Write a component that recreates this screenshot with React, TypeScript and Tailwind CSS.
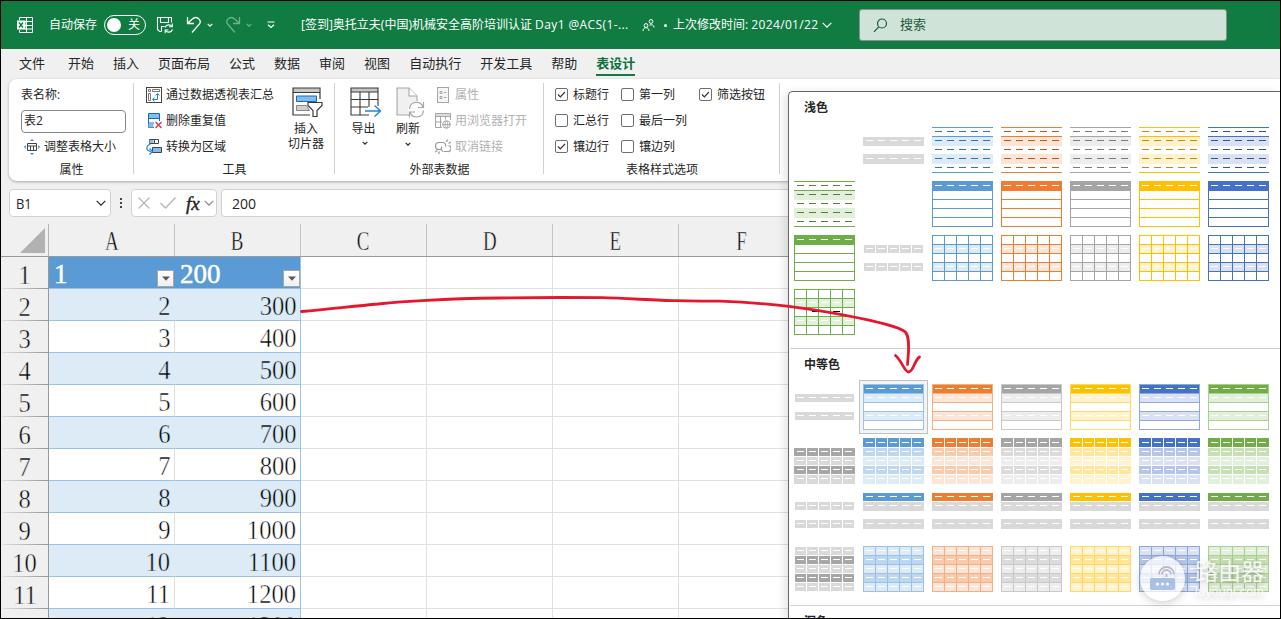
import React from "react";
import { clsx } from "clsx";

type Palette = { base: string; dark: string; mid: string; light: string; line: string };

const palettes: Record<string, Palette> = {
  blue: { base: "#5b9bd5", dark: "#2f75b5", mid: "#bdd7ee", light: "#ddebf7", line: "#9bc2e6" },
  orange: { base: "#ed7d31", dark: "#c65911", mid: "#f8cbad", light: "#fce4d6", line: "#f4b084" },
  gray: { base: "#a5a5a5", dark: "#7b7b7b", mid: "#dbdbdb", light: "#ededed", line: "#c9c9c9" },
  yellow: { base: "#ffc000", dark: "#bf8f00", mid: "#ffe699", light: "#fff2cc", line: "#ffd966" },
  navy: { base: "#4472c4", dark: "#305496", mid: "#b4c6e7", light: "#d9e1f2", line: "#8ea9db" },
  green: { base: "#70ad47", dark: "#548235", mid: "#c6e0b4", light: "#e2efda", line: "#a9d08e" },
};

const cols = [0, 1, 2, 3, 4];

function Dashes({ y, fill = "#fff" }: { y: number; fill?: string }) {
  return (
    <>
      {cols.map((c) => (
        <rect key={c} x={3 + 12 * c} y={y} width={7} height={1} fill={fill} />
      ))}
    </>
  );
}

function Band({ y, h, fill, x = 0, w = 61 }: { y: number; h: number; fill: string; x?: number; w?: number }) {
  return <rect x={x} y={y} width={w} height={h} fill={fill} />;
}

function Cells({ y, h, fill, full }: { y: number; h: number; fill: string; full?: boolean }) {
  return (
    <>
      {cols.map((c) => {
        const x = full && c === 0 ? 0 : 1 + 12 * c;
        const end = full && c === 4 ? 61 : 12 + 12 * c;
        return <rect key={c} x={x} y={y} width={end - x} height={h} fill={fill} />;
      })}
    </>
  );
}

function Grid({ color, vertical }: { color: string; vertical?: boolean }) {
  return (
    <>
      {[0, 9, 18, 27, 36, 45].map((y) => (
        <rect key={y} x={0} y={y} width={61} height={1} fill={color} />
      ))}
      {(vertical ? [0, 12, 24, 36, 48, 60] : [0, 60]).map((x) => (
        <rect key={x} x={x} y={0} width={1} height={46} fill={color} />
      ))}
    </>
  );
}

const G = "#d9d9d9";
const D = "#a6a6a6";

function drawing(kind: string, p?: Palette) {
  switch (kind) {
    case "L1":
      return p ? (
        <>
          <Band y={9} h={10} fill={p.light} />
          <Band y={27} h={10} fill={p.light} />
          <Band y={0} h={1} fill={p.base} />
          <Band y={9} h={1} fill={p.base} />
          <Band y={45} h={1} fill={p.base} />
          {[4, 13, 22, 31, 40].map((y) => <Dashes key={y} y={y} fill={p.dark} />)}
        </>
      ) : (
        <>
          <Band y={10} h={9} fill={G} />
          <Band y={27} h={10} fill={G} />
          <Dashes y={13} />
          <Dashes y={31} />
        </>
      );
    case "L2":
      return p ? (
        <>
          <Grid color={p.base} />
          <Band y={0} h={10} fill={p.base} />
          <Dashes y={4} />
        </>
      ) : null;
    case "L3":
    case "L3x":
      return p ? (
        <>
          <Band y={10} h={8} fill={p.light} />
          <Band y={28} h={8} fill={p.light} />
          <Grid color={p.base} vertical />
          <Dashes y={13} />
          <Dashes y={31} />
          {kind === "L3x" && (
            <>
              <rect x={18} y={22} width={6} height={1} fill="#000" />
              <rect x={39} y={22} width={7} height={1} fill="#000" />
            </>
          )}
        </>
      ) : (
        <>
          <Cells y={10} h={8} fill={G} />
          <Cells y={28} h={8} fill={G} />
          <Dashes y={13} />
          <Dashes y={31} />
        </>
      );
    case "M1":
      return p ? (
        <>
          <Band y={0} h={46} fill="#fff" />
          <Band y={1} h={8} fill={p.base} />
          <Band y={10} h={8} fill={p.light} />
          <Band y={28} h={8} fill={p.light} />
          <Grid color={p.line} />
          <Dashes y={4} />
          <Dashes y={13} />
          <Dashes y={31} />
        </>
      ) : (
        <>
          <Band x={1} w={59} y={10} h={8} fill={G} />
          <Band x={1} w={59} y={28} h={8} fill={G} />
          <Dashes y={13} />
          <Dashes y={31} />
        </>
      );
    case "M2":
      return (
        <>
          {p && <Cells full y={0} h={9} fill={p.base} />}
          <Cells full y={10} h={8} fill={p ? p.mid : D} />
          <Cells full y={19} h={8} fill={p ? p.light : G} />
          <Cells full y={28} h={8} fill={p ? p.mid : D} />
          <Cells full y={37} h={9} fill={p ? p.light : G} />
          {[...(p ? [4] : []), 13, 22, 31, 40].map((y) => <Dashes key={y} y={y} />)}
        </>
      );
    case "M3":
      return p ? (
        <>
          <Band y={1} h={8} fill={p.base} />
          <Band y={10} h={9} fill={G} />
          <Band y={27} h={10} fill={G} />
          <Dashes y={4} />
          <Dashes y={13} />
          <Dashes y={31} />
        </>
      ) : (
        <>
          <Cells y={10} h={8} fill={G} />
          <Cells y={28} h={8} fill={G} />
          <Dashes y={13} />
          <Dashes y={31} />
        </>
      );
    default:
      return (
        <>
          {[1, 10, 19, 28, 37].map((y, i) =>
            p ? (
              <Band key={y} y={y} h={8} fill={i % 2 ? p.mid : p.light} />
            ) : (
              <Cells key={y} y={y} h={8} fill={i % 2 ? D : G} />
            ),
          )}
          {p && <Grid color={p.line} vertical />}
          {[4, 13, 22, 31, 40].map((y) => <Dashes key={y} y={y} />)}
        </>
      );
  }
}

function Thumb({ kind, tone, selected }: { kind: string; tone?: string; selected?: boolean }) {
  return (
    <div className="relative h-[46px] w-[61px]">
      {selected && <div className="absolute -inset-1 border border-[#c0c0c0] bg-[#f3f3f3]" />}
      {kind !== "none" && (
        <svg width="61" height="46" shapeRendering="crispEdges" className="relative block">
          {drawing(kind, tone ? palettes[tone] : undefined)}
        </svg>
      )}
    </div>
  );
}

const tones = ["blue", "orange", "gray", "yellow", "navy"];
const row = (kind: string, list: string[]) => list.map((tone) => ({ kind, tone }));
const lightItems: { kind: string; tone?: string }[] = [
  { kind: "none" }, { kind: "L1" }, ...row("L1", tones),
  { kind: "L1", tone: "green" }, { kind: "L2" }, ...row("L2", tones),
  { kind: "L2", tone: "green" }, { kind: "L3" }, ...row("L3", tones),
  { kind: "L3x", tone: "green" },
];
const mediumItems: { kind: string; tone?: string }[] = ["M1", "M2", "M3", "M4"].flatMap((k) => [
  { kind: k },
  ...row(k, [...tones, "green"]),
]);

function Gallery() {
  return (
    <div className="absolute bottom-0 left-[787px] right-0 top-[90px] overflow-hidden rounded-tl-[5px] border-l border-t border-[#666] bg-white shadow-[-3px_2px_10px_rgba(0,0,0,0.12)]">
      <div className="h-[35px] pl-[15px] text-[12px] font-bold leading-[31px] text-[#262626]">浅色</div>
      <div className="ml-[5px] grid grid-cols-[repeat(7,61px)] gap-2">
        {lightItems.map((t, i) => <Thumb key={i} {...t} />)}
      </div>
      <div className="ml-px mt-[13px] h-px bg-[#d0d0d0]" />
      <div className="h-[35px] pl-[15px] text-[12px] font-bold leading-[32px] text-[#262626]">中等色</div>
      <div className="ml-[5px] grid grid-cols-[repeat(7,61px)] gap-2">
        {mediumItems.map((t, i) => <Thumb key={i} {...t} selected={i === 1} />)}
      </div>
      <div className="ml-px mt-[13px] h-px bg-[#d0d0d0]" />
      <div className="h-[35px] pl-[15px] text-[12px] font-bold leading-[31px] text-[#262626]">深色</div>
    </div>
  );
}

function Chevron({ w = 7, className = "" }: { w?: number; className?: string }) {
  const h = w / 2;
  return (
    <svg width={w + 1} height={h + 2} viewBox={`0 0 ${w + 1} ${h + 2}`} className={clsx("block shrink-0", className)}>
      <path d={`M.7 .8 L${(w + 1) / 2} ${h + 0.6} L${w + 0.3} .8`} fill="none" stroke="currentColor" strokeWidth="1.2" />
    </svg>
  );
}

function TitleBar() {
  return (
    <div className="flex h-12 shrink-0 items-center bg-[#107c41] text-[12px] text-white">
      <svg width="18" height="18" viewBox="0 0 18 18" className="ml-[15px] shrink-0" fill="none" stroke="#fff" strokeWidth="1">
        <path d="M3.500 4V1.500h13v15h-13V14M10.500 1.500v15M3.500 5.500h13M9 9.500h7.500M9 13h7.500" />
        <rect x="1" y="4.500" width="8.500" height="9" fill="#fff" stroke="none" />
        <path d="M3 6.500l4 5M7 6.500l-4 5" stroke="#107c41" strokeWidth="1.400" />
      </svg>
      <span className="ml-[15px] w-[49px] shrink-0 whitespace-nowrap">自动保存</span>
      <div className="ml-[6px] flex h-5 w-[42px] shrink-0 items-center rounded-full border border-white pl-[2px]">
        <div className="size-[14px] rounded-full bg-white" />
        <span className="ml-[7px] text-[12px] leading-none">关</span>
      </div>
      <svg width="18" height="18" viewBox="0 0 18 18" className="ml-[10px] shrink-0" fill="none" stroke="#fff" strokeWidth="1.100">
        <path d="M5.500 15.500h-2L1.500 13.500v-12h14v5M4.500 1.500v5h8v-5M5.500 15.500v-5h3" />
        <path d="M9 11.500a4 4 0 0 1 7-1M16.300 7.500v3.200h-3.200M16.500 13.500a4 4 0 0 1-7 1M9.200 17.200v-3.200h3.200" />
      </svg>
      <svg width="16" height="18" viewBox="0 0 16 18" className="ml-[12px] shrink-0" fill="none" stroke="#fff" strokeWidth="1.300">
        <path d="M1.500 1v6.500H8M1.500 7.500L6 3.200c5-4.400 10.500 1.300 7 5.300L6 16.500" />
      </svg>
      <Chevron w={5} className="ml-[5px]" />
      <svg width="16" height="18" viewBox="0 0 16 18" className="ml-[12px] shrink-0 opacity-40" fill="none" stroke="#fff" strokeWidth="1.300">
        <path d="M14.500 1v6.500H8M14.500 7.500L10 3.200C5-1.200-.5 4.500 3 8.500L10 16.500" />
      </svg>
      <Chevron w={5} className="ml-[5px] opacity-40" />
      <svg width="8" height="8" viewBox="0 0 8 8" className="ml-[15px] shrink-0" fill="none" stroke="#fff" strokeWidth="1.200">
        <path d="M.5 1h7M1 3.800l3 2.700 3-2.700" />
      </svg>
      <div className="ml-[26px] w-[334px] shrink-0 whitespace-nowrap">
        [签到]奥托立夫(中国)机械安全高阶培训认证 <span className="tracking-[0.4px]">Day1 @ACS(1-...</span>
      </div>
      <svg width="13" height="13" viewBox="0 0 13 13" className="ml-[7px] shrink-0" fill="none" stroke="#fff" strokeWidth="1">
        <circle cx="4" cy="6.500" r="1.900" />
        <path d="M1 12c0-4.500 6-4.500 6 0" />
        <circle cx="9" cy="2.500" r="1.900" />
        <path d="M7.500 6.200c2-1 4.500-.3 4.500 2.300" />
      </svg>
      <div className="ml-[9px] size-[3px] shrink-0 rounded-full bg-white" />
      <div className="ml-[6px] w-[146px] shrink-0 whitespace-nowrap">
        上次修改时间: <span className="tracking-[0.350px]">2024/01/22</span>
      </div>
      <Chevron w={9} className="ml-[3px]" />
      <div className="ml-[27px] flex h-8 w-[368px] shrink-0 items-center rounded-[3px] border border-[#8a8f8c] bg-[#cfe3d8] text-[13px] text-[#1d5b39]">
        <svg width="15" height="15" viewBox="0 0 15 15" className="ml-[13px]" fill="none" stroke="#185c37" strokeWidth="1.200">
          <circle cx="9" cy="5.500" r="4.500" />
          <path d="M5.800 8.800L1 13.800" />
        </svg>
        <span className="ml-[12px]">搜索</span>
      </div>
    </div>
  );
}

const tabs = ["文件", "开始", "插入", "页面布局", "公式", "数据", "审阅", "视图", "自动执行", "开发工具", "帮助", "表设计"];

function Tabs() {
  return (
    <div className="flex h-[30px] shrink-0 gap-[19px] pl-[18px] text-[13px] leading-[29px] text-[#262626]">
      {tabs.map((t, i) => (
        <div
          key={t}
          className={clsx(
            "h-[27px] shrink-0 whitespace-nowrap",
            i === 0 && "mr-[4px]",
            i === 11 && "border-b-2 border-[#107c41] font-bold text-[#0f703b]",
          )}
        >
          {t}
        </div>
      ))}
    </div>
  );
}

function Group({ label, className, children }: { label: string; className: string; children: React.ReactNode }) {
  return (
    <div className={clsx("relative flex h-[97px] shrink-0 flex-col", className)}>
      <div className="flex h-[78px]">{children}</div>
      <div className="h-[18px] text-center leading-[19px]">{label}</div>
      <div className="absolute bottom-[5px] right-0 top-[1px] w-px bg-[#d1d1d1]" />
    </div>
  );
}

function Item({ icon, children, disabled }: { icon: React.ReactNode; children: React.ReactNode; disabled?: boolean }) {
  return (
    <div className={clsx("flex h-[26px] items-center gap-[4px] whitespace-nowrap", disabled && "text-[#b1b1b1]")}>
      <svg width="16" height="16" viewBox="0 0 16 16" fill="none" className="shrink-0">{icon}</svg>
      {children}
    </div>
  );
}

function Check({ label, on }: { label: string; on?: boolean }) {
  return (
    <div className="flex h-[26px] items-center gap-[5px] whitespace-nowrap">
      <div className="mb-[2px] flex size-[13px] items-center justify-center rounded-[2px] border border-[#6e6e6e] bg-white">
        {on && (
          <svg width="9" height="9" viewBox="0 0 9 9" fill="none" stroke="#333" strokeWidth="1.200">
            <path d="M1 4.500l2.300 2.300L8 2" />
          </svg>
        )}
      </div>
      {label}
    </div>
  );
}

function Ribbon() {
  return (
    <div className="ml-2 flex h-[102px] shrink-0 overflow-visible rounded-l-[8px] bg-white pt-[3px] text-[12px] text-[#262626] shadow-[0_1px_3px_rgba(0,0,0,0.3)]">
      <Group label="属性" className="w-[125px]">
        <div className="flex flex-col pl-3">
          <div className="h-[26px] leading-[26px]">表名称:</div>
          <div className="flex h-[26px] items-center">
            <div className="h-[23px] w-[105px] rounded-[4px] border border-[#868686] pl-[2px] leading-[20px]">表2</div>
          </div>
          <div className="pl-[3px]">
            <Item
              icon={
                <>
                  <path d="M3.500 4.500h9v7h-9zM3.500 7h9M6.500 7v4.500M9.500 7v4.500" stroke="#444" />
                  <path d="M8 0l2 2H6zM8 16l2-2H6zM0 8l1.800-2v4zM16 8l-1.800-2v4z" fill="#2b88d8" />
                </>
              }
            >
              调整表格大小
            </Item>
          </div>
        </div>
      </Group>
      <Group label="工具" className="w-[201px]">
        <div className="flex w-[144px] flex-col pl-[12px]">
          <Item
            icon={
              <>
                <rect x=".5" y=".5" width="15" height="15" stroke="#444" />
                <path d="M2.500 2.500h2v2h-2zM6.500 2.500h7v2h-7zM2.500 6.500h2v7h-2z" stroke="#777" />
                <path d="M7 12.500h4.500V7M9.500 8.500l2-2 2 2M8.500 10.500l-2 2 2 2" stroke="#1a86d9" />
              </>
            }
          >
            通过数据透视表汇总
          </Item>
          <Item
            icon={
              <>
                <path d="M2.500 1h11v4h-11z" fill="#83bdec" />
                <path d="M2.500.5h11v14h-11zM2.500 5.500h11M2.500 10h11" stroke="#0f6cbd" />
                <path d="M2.500 10.500h5v4h-5z" fill="#83bdec" />
                <path d="M8 8h8v8H8z" fill="#fff" />
                <path d="M9.500 9l6 6M15.500 9l-6 6" stroke="#e0314b" strokeWidth="1.300" />
              </>
            }
          >
            删除重复值
          </Item>
          <Item
            icon={
              <>
                <path d="M3.500.5h5v4h-5zM8.500.5h4v4h-4z" stroke="#444" />
                <path d="M3.500 1h4v3h-4z" fill="#83bdec" />
                <path d="M6.500 8.500h9v5h-9z" fill="#83bdec" stroke="#444" />
                <path d="M4.500 5C-.5 7-.5 12 5 12.500M3.500 9.500l3 3-3 3" stroke="#1a86d9" strokeWidth="1.200" />
              </>
            }
          >
            转换为区域
          </Item>
        </div>
        <div className="flex w-[56px] flex-col items-center pt-[5px] leading-[15px]">
          <svg width="32" height="32" viewBox="0 0 32 32" fill="none" className="ml-[2px]">
            <path d="M2 1h26v4H2z" fill="#c8c6c4" />
            <path d="M29 12V1H2v27h17" stroke="#3b3a39" strokeWidth="1.200" />
            <path d="M2 5.500h27" stroke="#3b3a39" />
            <path d="M5.500 9h20v5.500h-20z" fill="#83bdec" stroke="#0f6cbd" />
            <path d="M5.500 18.500h10l3 5h-13z" fill="#d2d0ce" stroke="#8a8886" />
            <path d="M17 15.500h14v3l-5 5v6h-4v-6l-5-5z" fill="#fff" stroke="#3b3a39" strokeWidth="1.200" />
          </svg>
          <span className="mt-[2px]">插入</span>
          <span>切片器</span>
        </div>
      </Group>
      <Group label="外部表数据" className="w-[209px]">
        <div className="flex w-[57px] flex-col items-center pt-[5px] leading-[15px]">
          <svg width="32" height="32" viewBox="0 0 32 32" fill="none" className="ml-[2px]">
            <path d="M2 1h27v4H2z" fill="#c8c6c4" />
            <path d="M29 19V1H2v27h18M2 5h27M2 12.500h27M2 20h17M11 5v23M20 5v15" stroke="#3b3a39" strokeWidth="1.100" />
            <path d="M16 24h15M25.500 18.500l6 5.500-6 5.500" stroke="#1a86d9" strokeWidth="1.300" />
          </svg>
          <span className="mt-[2px]">导出</span>
          <Chevron w={5} className="ml-[3px] mt-[5px]" />
        </div>
        <div className="flex w-[32px] flex-col items-center pt-[5px] leading-[15px]">
          <svg width="30" height="32" viewBox="0 0 30 32" fill="none" className="ml-[4px]">
            <path d="M14 28H2V1h12l8 8v5" fill="#f0f0f0" stroke="#a6a6a6" strokeWidth="1.100" />
            <path d="M14 1v8h8" fill="#fff" stroke="#a6a6a6" strokeWidth="1.100" />
            <circle cx="21.500" cy="22.500" r="8.500" fill="#fff" />
            <path d="M14.500 22c.5-8 11-9 13.500-2M28.500 15v5.500H23M28.500 23.500c-.5 8-11 8.500-13.500 2M14.500 30.500V25H20" stroke="#a6a6a6" strokeWidth="1.200" />
          </svg>
          <span className="mt-[2px]">刷新</span>
          <Chevron w={5} className="mt-[6px]" />
        </div>
        <div className="flex flex-col pl-[11px]">
          <Item
            disabled
            icon={
              <>
                <rect x="2.500" y=".5" width="11" height="15" stroke="#a6a6a6" fill="#f5f5f5" />
                <path d="M5 4.500h2v2H5zM5 9.500h2v2H5zM9 5.500h2.500M9 10.500h2.500" stroke="#a6a6a6" />
              </>
            }
          >
            属性
          </Item>
          <Item
            disabled
            icon={
              <>
                <path d="M.5.500h15v3H.5z" fill="#ddd" />
                <path d="M7 14.500H.5V.5h15V7M.5 3.500h15M.5 9H7M5.500 3.500v11M10.500 3.500v3" stroke="#a6a6a6" />
                <circle cx="11.500" cy="11.500" r="3.800" fill="#fff" stroke="#a6a6a6" />
                <path d="M7.500 11.500h8M11.500 8c-2 2-2 5 0 7c2-2 2-5 0-7" stroke="#a6a6a6" />
              </>
            }
          >
            用浏览器打开
          </Item>
          <Item
            disabled
            icon={
              <path
                d="M6 10.500H4a3 3 0 0 1 0-7h4c2 0 3 2 2.500 4M9 12.500h3.500a3 3 0 0 0 1-6M8.500 12.500c-2.500-.5-3-3-1.500-5M11.500 3l1-2.500M13.500 4.500L16 3M4.500 12.500L3.500 15M2.500 11.500L0 13"
                stroke="#999"
                strokeWidth="1.200"
              />
            }
          >
            取消链接
          </Item>
        </div>
      </Group>
      <Group label="表格样式选项" className="w-[236px]">
        <div className="flex w-[66px] flex-col pl-[11px]">
          <Check label="标题行" on />
          <Check label="汇总行" />
          <Check label="镶边行" on />
        </div>
        <div className="ml-[11px] flex w-[78px] flex-col">
          <Check label="第一列" />
          <Check label="最后一列" />
          <Check label="镶边列" />
        </div>
        <div>
          <Check label="筛选按钮" on />
        </div>
      </Group>
    </div>
  );
}

function FormulaBar() {
  return (
    <div className="mt-2 flex h-7 shrink-0 pl-2 text-[15px] text-[#262626]">
      <div className="flex w-[102px] shrink-0 items-center justify-between rounded-[4px] border border-[#d1d1d1] bg-white pl-[6px] pr-[4px]">
        <span className="inline-block origin-left scale-x-[.86]">B1</span>
        <Chevron w={9} />
      </div>
      <div className="flex w-5 shrink-0 flex-col items-center justify-center gap-[2px]">
        <i className="size-[2px] bg-[#444]" />
        <i className="size-[2px] bg-[#444]" />
        <i className="size-[2px] bg-[#444]" />
      </div>
      <div className="flex w-[86px] shrink-0 items-center rounded-[4px] border border-[#d1d1d1] bg-white">
        <svg width="12" height="12" viewBox="0 0 12 12" className="ml-[6px]" stroke="#b5b5b5" strokeWidth="1.200" fill="none">
          <path d="M.5.500l11 11M11.500.500l-11 11" />
        </svg>
        <svg width="16" height="12" viewBox="0 0 16 12" className="ml-[10px]" stroke="#b5b5b5" strokeWidth="1.300" fill="none">
          <path d="M.5 6l5 5L15.500.500" />
        </svg>
        <span className="ml-[10px] font-['Liberation_Serif',serif] text-[19px] italic leading-none text-[#222] [-webkit-text-stroke:0.4px_#222]">fx</span>
        <Chevron w={9} className="ml-[4px] text-[#888]" />
      </div>
      <div className="ml-1 flex grow items-center rounded-l-[4px] border border-r-0 border-[#d1d1d1] bg-white pl-[10px]">
        <span className="inline-block origin-left scale-x-[.94]">200</span>
      </div>
    </div>
  );
}

const digits = "font-['Liberation_Serif',serif] text-[27px] text-black whitespace-nowrap";

function Filter() {
  return (
    <div className="mt-[13px] flex h-[17px] w-[17px] shrink-0 items-center justify-center border border-[#a6a6a6] bg-linear-to-b from-white to-[#f0f0f0]">
      <svg width="8" height="5" viewBox="0 0 8 5"><path d="M0 .5h8L4 4.800z" fill="#595959" /></svg>
    </div>
  );
}

const rows = Array.from({ length: 12 }, (_, i) => i + 1);
const emptyCols = ["C", "D", "E", "F"];

function Sheet() {
  return (
    <div className="mt-[7px] flex min-h-0 grow flex-col overflow-hidden">
      <div className="flex h-[33px] shrink-0 border-b border-[#999]">
        <div className="flex w-12 shrink-0 items-end justify-end border-r border-[#b5b5b5] pb-[3px] pr-[3px]">
          <svg width="25" height="25"><path d="M25 0v25H0z" fill="#b2b2b2" /></svg>
        </div>
        {["A", "B", ...emptyCols].map((c) => (
          <div
            key={c}
            className={clsx(digits, "w-[126px] shrink-0 border-r border-[#c4c4c4] text-center leading-[34px] [-webkit-text-stroke:0.5px_#f0f0f0]")}
          >
            <span className="inline-block scale-x-[.7]">{c}</span>
          </div>
        ))}
      </div>
      {rows.map((r) => {
        const band = r % 2 === 0;
        const head = r === 1;
        return (
          <div key={r} className="flex h-8 shrink-0 bg-white">
            <div className="flex w-12 shrink-0 flex-col border-r border-[#999] bg-[#f0f0f0]">
              <div className={clsx(digits, "h-[31px] pt-[2px] text-center leading-[32px] [-webkit-text-stroke:0.5px_#f0f0f0]")}>
                <span className="inline-block scale-x-[.91]">{r}</span>
              </div>
              <div className="h-px bg-linear-to-r from-[#e0e0e0] to-[#999]" />
            </div>
            {head ? (
              <>
                {["1", "200"].map((v, i) => (
                  <div
                    key={v}
                    className={clsx(
                      "flex w-[126px] shrink-0 justify-between border-b border-[#9bc2e6] bg-[#5b9bd5] pl-[5px] font-['Liberation_Serif',serif] text-[27px] leading-[35px] text-white [-webkit-text-stroke:0.5px_white]",
                      i === 0 ? "pr-px" : "border-r border-r-[#9bc2e6]",
                    )}
                  >
                    {v}
                    <Filter />
                  </div>
                ))}
              </>
            ) : (
              <>
                {[r, r * 100 + 100].map((v, i) => (
                  <div
                    key={i}
                    className={clsx(
                      digits,
                      "w-[126px] shrink-0 border-b border-r border-b-[#9bc2e6] pr-[4px] text-right leading-[34px]",
                      band
                        ? "bg-[#ddebf7] [-webkit-text-stroke:0.5px_#ddebf7]"
                        : "bg-white [-webkit-text-stroke:0.5px_white]",
                      i === 1 ? "border-r-[#9bc2e6]" : band ? "border-r-[#ddebf7]" : "border-r-[#e1e1e1]",
                    )}
                  >
                    <span className="inline-block origin-right scale-x-[.91]">{v}</span>
                  </div>
                ))}
              </>
            )}
            {emptyCols.map((c) => (
              <div key={c} className="w-[126px] shrink-0 border-b border-r border-[#e1e1e1]" />
            ))}
            <div className="grow border-b border-[#e1e1e1]" />
          </div>
        );
      })}
    </div>
  );
}

function Arrow() {
  return (
    <svg width="640" height="100" viewBox="300 285 640 100" className="absolute left-[299px] top-[284px]" fill="none" stroke="#e5172f" strokeWidth="2.800" strokeLinecap="round" strokeLinejoin="round">
      <path d="M301.500 311.500C328 309.500 350 306.500 378 304C395 302 410 301 427 300.300C450 299 475 298.300 500 298C530 297.500 570 297.400 602 297.700C625 298 655 300.500 676 300.700C690 301 705 301 720 301.200C745 302 768 304 789 306.300C810 309 840 314 859 318C875 321.500 895 325.500 904 331C909.500 334 908.500 345 908.500 352L907.500 364.500" />
      <path d="M895.500 355.500C902 361 904.500 372 908.500 372C913.500 372 914 361 919.500 357" />
    </svg>
  );
}

function Watermark() {
  return (
    <div className="absolute left-[1139px] top-[555px] flex items-center">
      <div className="flex size-[45px] items-center justify-center rounded-full bg-white/75 shadow-[0_2px_8px_rgba(0,0,0,0.2)]">
        <svg width="27" height="27" viewBox="0 0 27 27" fill="none">
          <rect x="1" y="13" width="25" height="12" rx="2" fill="#8ea9db" opacity=".7" />
          <path d="M17.500 12V9M13 9.500a4.500 4.500 0 0 1 9 0M10 9.500a7.500 7.500 0 0 1 15 0" stroke="#b4bac6" strokeWidth="1.800" />
          <circle cx="8.500" cy="19" r="1.500" fill="#fff" />
          <circle cx="13.500" cy="19" r="1.500" fill="#fff" />
          <circle cx="18.500" cy="19" r="1.500" fill="#fff" />
        </svg>
      </div>
      <div className="ml-[10px] flex flex-col pt-[2px] text-white/85 [text-shadow:0_2px_7px_rgba(0,0,0,0.28)]">
        <span className="text-[23px] leading-[23px]">路由器</span>
        <span className="mt-[2px] font-['Liberation_Sans',sans-serif] text-[12.500px] leading-[14px] tracking-[0.200px]">luyouqi.com</span>
      </div>
    </div>
  );
}

export default function App() {
  return (
    <div className="relative flex h-[619px] w-[1281px] flex-col overflow-hidden border border-black bg-[#f0f0f0] font-['Open_Sans','Noto_Sans_CJK_SC',sans-serif]">
      <TitleBar />
      <Tabs />
      <Ribbon />
      <FormulaBar />
      <Sheet />
      <Gallery />
      <Arrow />
      <Watermark />
    </div>
  );
}
